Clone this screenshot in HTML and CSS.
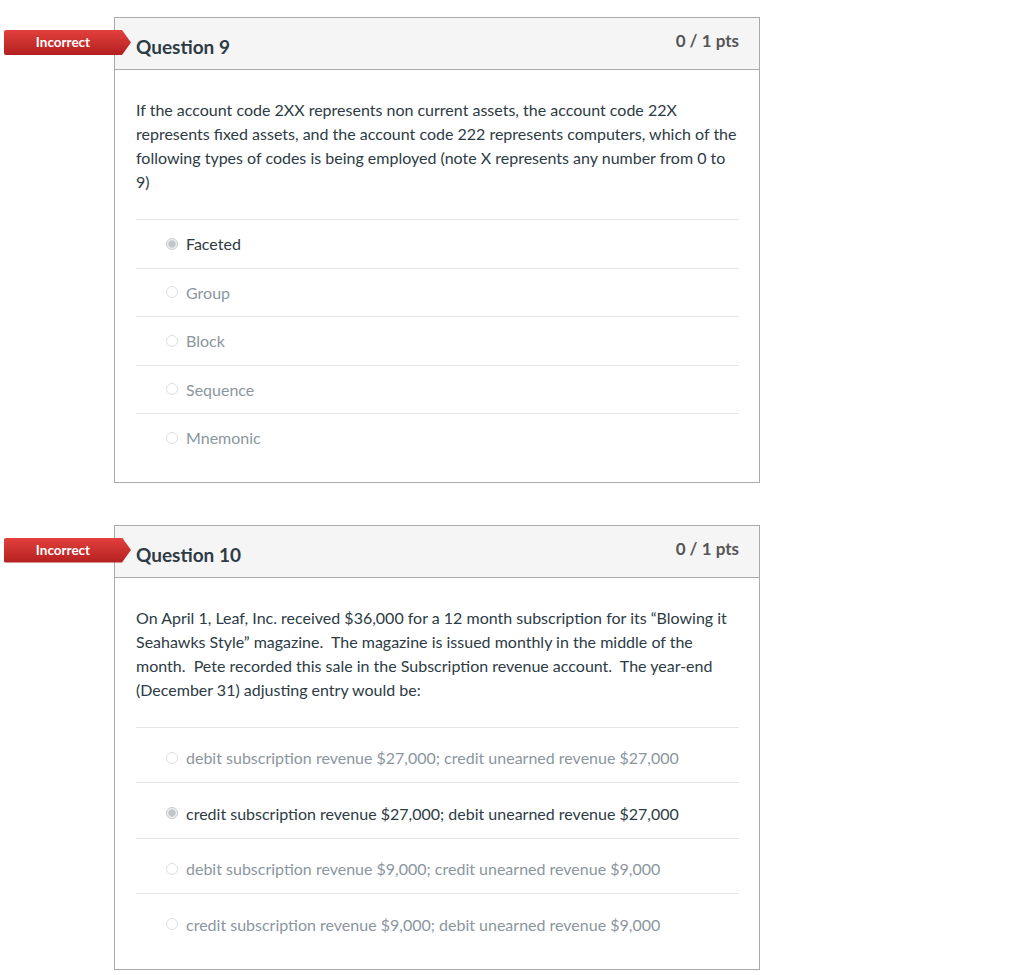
FILE: index.html
```html
<!DOCTYPE html>
<html lang="en">
<head>
    <meta charset="UTF-8">
    <title>Quiz Results</title>
    <link rel="stylesheet" href="styles.css">
</head>
<body>
    <div class="quiz">
        <div class="question">
            <div class="badge">Incorrect</div>
            <div class="question-header">
                <h2>Question 9</h2>
                <span class="pts">0 / 1 pts</span>
            </div>
            <div class="question-body">
                <p class="question-text">If the account code 2XX represents non current assets, the account code 22X represents fixed assets, and the account code 222 represents computers, which of the following types of codes is being employed (note X represents any number from 0 to 9)</p>
                <div class="answers">
                    <div class="answer selected"><span class="radio"></span>Faceted</div>
                    <div class="answer"><span class="radio"></span>Group</div>
                    <div class="answer"><span class="radio"></span>Block</div>
                    <div class="answer"><span class="radio"></span>Sequence</div>
                    <div class="answer"><span class="radio"></span>Mnemonic</div>
                </div>
            </div>
        </div>

        <div class="question">
            <div class="badge">Incorrect</div>
            <div class="question-header">
                <h2>Question 10</h2>
                <span class="pts">0 / 1 pts</span>
            </div>
            <div class="question-body">
                <p class="question-text">On April 1, Leaf, Inc. received $36,000 for a 12 month subscription for its “Blowing it Seahawks Style” magazine.&nbsp; The magazine is issued monthly in the middle of the month.&nbsp; Pete recorded this sale in the Subscription revenue account.&nbsp; The year-end (December 31) adjusting entry would be:</p>
                <div class="answers tall">
                    <div class="answer"><span class="radio"></span>debit subscription revenue $27,000; credit unearned revenue $27,000</div>
                    <div class="answer selected"><span class="radio"></span>credit subscription revenue $27,000; debit unearned revenue $27,000</div>
                    <div class="answer"><span class="radio"></span>debit subscription revenue $9,000; credit unearned revenue $9,000</div>
                    <div class="answer"><span class="radio"></span>credit subscription revenue $9,000; debit unearned revenue $9,000</div>
                </div>
            </div>
        </div>
    </div>
</body>
</html>
```

FILE: styles.css
```css
/* Base */
body {
    margin: 0;
    padding: 0;
    font-family: Lato, "Open Sans", sans-serif;
    color: #2d3b45;
    background-color: #ffffff;
}

.quiz {
    padding: 17px 0 0 114px;
    width: 646px;
}

.question {
    position: relative;
    border: 1px solid #aaaaaa;
    margin-bottom: 42px;
}

/* Incorrect badge, sticks out over the header */
.badge {
    position: absolute;
    left: -111px;
    top: 12px;
    width: 127px;
    height: 25px;
    line-height: 25px;
    padding-right: 9px;
    box-sizing: border-box;
    text-align: center;
    color: #ffffff;
    font-size: 13.5px;
    font-weight: bold;
    background: linear-gradient(#e2403d, #b3201f);
    clip-path: polygon(0 0, 118px 0, 127px 50%, 118px 100%, 0 100%);
    border-radius: 2px 0 0 2px;
}

.question-header {
    display: flex;
    justify-content: space-between;
    align-items: flex-start;
    height: 51px;
    padding: 0 20px 0 21px;
    background-color: #f5f5f5;
    border-bottom: 1px solid #aaaaaa;
}

.question-header h2 {
    margin: 17px 0 0;
    font-size: 19px;
    font-weight: bold;
    line-height: 23px;
}

.pts {
    margin-top: 13px;
    font-size: 17px;
    font-weight: bold;
    color: #555555;
    line-height: 20px;
}

.question-body {
    padding: 28px 20px 20px 21px;
}

.question-text {
    margin: 0 0 25px;
    font-size: 16px;
    line-height: 24px;
}

.answers {
    border-top: 1px solid #e4e6e8;
}

.answer {
    display: flex;
    align-items: center;
    height: 47.5px;
    padding-left: 30px;
    font-size: 16px;
    color: #8b969e;
    border-bottom: 1px solid #e4e6e8;
}

.answer:last-child {
    border-bottom: none;
}

.answers.tall .answer {
    height: 49px;
    padding-top: 5.5px;
}

.answer.selected {
    color: #2d3b45;
}

.radio {
    width: 12px;
    height: 12px;
    margin-right: 8px;
    border: 1px solid #dcdfe2;
    border-radius: 50%;
    box-sizing: border-box;
    background-color: #ffffff;
}

.answer.selected .radio {
    border-color: #c9cccf;
    background: radial-gradient(circle, #c2c5c8 0, #c2c5c8 3.3px, #eeeeee 4px);
}
```
